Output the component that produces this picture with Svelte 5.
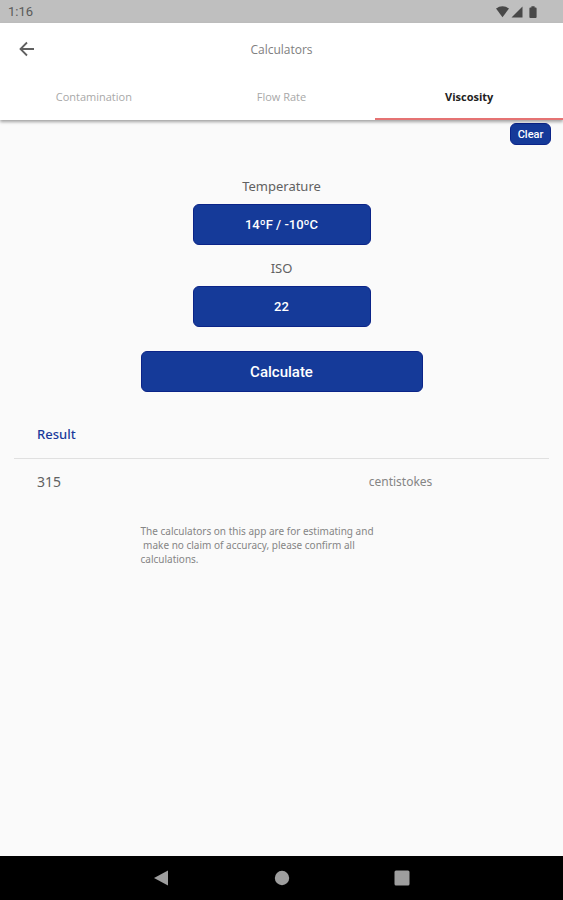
<script>
  const tabs = ['Contamination', 'Flow Rate', 'Viscosity'];
  const viscosity = { '14ºF / -10ºC|22': '315' };

  let active = $state('Viscosity');
  let temperature = $state('14ºF / -10ºC');
  let iso = $state('22');
  let result = $state('315');

  function calculate() {
    result = viscosity[`${temperature}|${iso}`] ?? '';
  }

  function clear() {
    result = '';
  }
</script>

<div class="screen">
  <div class="status">
    <span>1:16</span>
    <svg width="42" height="14" viewBox="0 0 42 14" aria-hidden="true">
      <path d="M0 3.6C3.8 .3 9.2 .3 13 3.6L6.5 12.2Z" />
      <path d="M26.5 1.5V12.5H15.5Z" />
      <path d="M35.4 1.2h3.2v1.3h1.1q.9 0 .9.9v8.7q0 .9-.9.9h-5.4q-.9 0-.9-.9V3.4q0-.9.9-.9h1.1Z" />
    </svg>
  </div>

  <header>
    <div class="bar">
      <button class="back" aria-label="Back">
        <svg width="16" height="16" viewBox="0 0 16 16" aria-hidden="true">
          <path d="M15 8H2M8 1.5L1.5 8L8 14.5" />
        </svg>
      </button>
      <h1>Calculators</h1>
    </div>
    <div class="tabs" role="tablist">
      {#each tabs as tab}
        <button
          role="tab"
          class:active={active === tab}
          aria-selected={active === tab}
          onclick={() => (active = tab)}>{tab}</button>
      {/each}
    </div>
  </header>

  <main>
    <button class="fill clear" onclick={clear}>Clear</button>

    <div class="form">
      <label for="temperature">Temperature</label>
      <select id="temperature" class="fill" bind:value={temperature}>
        <option>14ºF / -10ºC</option>
      </select>
      <label for="iso">ISO</label>
      <select id="iso" class="fill" bind:value={iso}>
        <option>22</option>
      </select>
      <button class="fill calculate" onclick={calculate}>Calculate</button>
    </div>

    <table>
      <thead>
        <tr><th scope="col">Result</th><td></td></tr>
      </thead>
      <tbody>
        <tr><td>{result}</td><td class="unit">centistokes</td></tr>
      </tbody>
    </table>

    <p>{'The calculators on this app are for estimating and\n make no claim of accuracy, please confirm all\ncalculations.'}</p>
  </main>

  <nav>
    <button aria-label="Back">
      <svg width="16" height="16" viewBox="0 0 16 16"><path d="M0 8L14 .5V15.500Z" /></svg>
    </button>
    <button aria-label="Home">
      <svg width="16" height="16" viewBox="0 0 16 16"><circle cx="8" cy="8" r="7.200" /></svg>
    </button>
    <button aria-label="Recent apps">
      <svg width="16" height="16" viewBox="0 0 16 16"><rect x=".5" y=".5" width="15" height="15" rx="1.500" /></svg>
    </button>
  </nav>
</div>

<style>
  :global(body) {
    margin: 0;
  }

  .screen {
    display: flex;
    flex-direction: column;
    min-height: 100vh;
    background: #fafafa;
    color: #616161;
    font-family: 'Noto Sans', 'Open Sans', sans-serif;
  }

  button,
  select {
    margin: 0;
    padding: 0;
    border: 0;
    background: none;
    font-family: inherit;
    cursor: pointer;
  }

  .status {
    display: flex;
    align-items: center;
    justify-content: space-between;
    height: 23px;
    padding: 0 25px 0 8px;
    background: #bfbfbf;
    color: #5a5a5a;
    font: 13px/23px Roboto, sans-serif;
  }

  .status svg {
    fill: #484848;
  }

  header {
    position: relative;
    background: #fff;
    box-shadow: 0 2px 3px rgba(0, 0, 0, 0.35);
  }

  .bar {
    display: grid;
    grid-template-columns: 54px 1fr 54px;
    align-items: center;
    height: 52px;
  }

  .back {
    display: grid;
    place-items: center;
    height: 52px;
  }

  .back svg {
    fill: none;
    stroke: #606060;
    stroke-width: 1.800;
  }

  h1 {
    margin: 0;
    text-align: center;
    font-family: 'Open Sans', sans-serif;
    font-size: 12px;
    font-weight: 400;
    color: #808080;
  }

  .tabs {
    display: grid;
    grid-template-columns: repeat(3, 1fr);
  }

  .tabs button {
    height: 45px;
    border-bottom: 2px solid transparent;
    font-family: 'Open Sans', sans-serif;
    font-size: 11px;
    color: #a8a8a8;
  }

  .tabs .active {
    border-color: #e57373;
    color: #222;
    font-weight: 700;
  }

  main {
    flex: 1;
    display: flex;
    flex-direction: column;
    padding: 3px 14px 0;
  }

  .fill {
    border-radius: 6px;
    border: 1px solid #0b2488;
    background: #153a99;
    color: #fff;
    font-family: Roboto, sans-serif;
    font-weight: 500;
  }

  .clear {
    align-self: flex-end;
    width: 41px;
    height: 22px;
    margin-right: -2px;
    font-size: 11px;
  }

  .form {
    display: flex;
    flex-direction: column;
    align-items: center;
    padding-top: 31px;
  }

  label {
    font-size: 13px;
    line-height: 20px;
    margin-bottom: 8px;
  }

  select {
    appearance: none;
    width: 178px;
    height: 41px;
    margin-bottom: 13px;
    font-size: 13px;
    text-align: center;
    text-align-last: center;
  }

  .calculate {
    width: 282px;
    height: 41px;
    margin-top: 11px;
    font-size: 15px;
  }

  table {
    width: 100%;
    margin-top: 19px;
    border-collapse: collapse;
    table-layout: fixed;
    text-align: left;
    font-size: 14px;
  }

  th,
  td {
    height: 47px;
    padding: 0 23px;
    box-sizing: border-box;
  }

  th {
    width: 62%;
    font-size: 13px;
    font-weight: 500;
    color: #1a3a9c;
  }

  thead tr {
    border-bottom: 1px solid #e0e0e0;
  }

  .unit {
    font-size: 12px;
    color: #858585;
  }

  p {
    width: 282px;
    margin: 19px auto;
    font-size: 10px;
    line-height: 14px;
    white-space: pre-wrap;
    color: #858585;
  }

  nav {
    display: flex;
    justify-content: center;
    gap: 104px;
    height: 44px;
    background: #000;
  }

  nav button {
    display: grid;
    place-items: center;
    width: 16px;
  }

  nav svg {
    fill: #9e9e9e;
  }
</style>
